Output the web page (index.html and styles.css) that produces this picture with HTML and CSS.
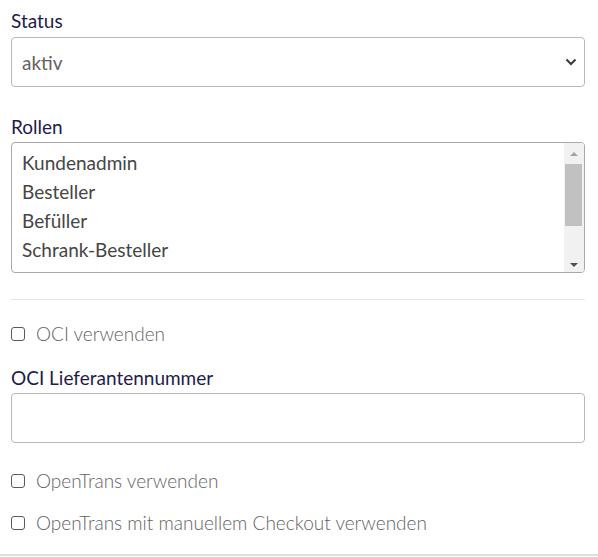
FILE: index.html
```html
<!DOCTYPE html>
<html lang="de">
<head>
<meta charset="utf-8">
<title>Benutzer</title>
<link rel="stylesheet" href="styles.css">
</head>
<body>
<form class="form">
  <div class="field">
    <label class="field-label">Status</label>
    <div class="select">
      <span class="select-value">aktiv</span>
      <svg class="chevron" width="12" height="8" viewBox="0 0 12 8"><path d="M1.5 1.5 L6 6 L10.5 1.5" fill="none" stroke="#3a3a3a" stroke-width="2"/></svg>
    </div>
  </div>

  <div class="field field-rollen">
    <label class="field-label">Rollen</label>
    <div class="listbox">
      <div class="listbox-items">
        <div class="option">Kundenadmin</div>
        <div class="option">Besteller</div>
        <div class="option">Befüller</div>
        <div class="option">Schrank-Besteller</div>
        <div class="option">Schrank-Befüller</div>
      </div>
      <div class="scrollbar">
        <svg class="arrow" width="20" height="14" viewBox="0 0 20 14"><path d="M6 9 L10 5 L14 9 Z" fill="#a3a3a3"/></svg>
        <div class="track"><div class="thumb"></div></div>
        <svg class="arrow" width="20" height="14" viewBox="0 0 20 14"><path d="M6 5 L10 9 L14 5 Z" fill="#505050"/></svg>
      </div>
    </div>
  </div>

  <hr class="divider">

  <label class="check"><span class="box"></span><span class="check-text">OCI verwenden</span></label>

  <div class="field field-oci">
    <label class="field-label">OCI Lieferantennummer</label>
    <div class="input"></div>
  </div>

  <label class="check check-ot"><span class="box"></span><span class="check-text">OpenTrans verwenden</span></label>
  <label class="check check-ot2"><span class="box"></span><span class="check-text">OpenTrans mit manuellem Checkout verwenden</span></label>
</form>
<div class="bottom-rule"></div>
</body>
</html>
```
FILE: styles.css
```css
html, body {
  margin: 0;
  padding: 0;
  background: #fff;
}
body {
  font-family: Lato, "Open Sans", sans-serif;
  font-size: 19px;
  width: 598px;
}
.form {
  display: flex;
  flex-direction: column;
  padding: 9px 13px 0 11px;
}
.field {
  display: flex;
  flex-direction: column;
  gap: 4px;
}
.field-label {
  color: #1f1b4b;
  line-height: 24px;
  font-size: 19px;
}
.select {
  height: 48px;
  border: 1px solid #b9b9b9;
  border-radius: 4px;
  display: flex;
  align-items: center;
  justify-content: space-between;
  padding: 0 7px 0 10px;
}
.select-value {
  color: #636363;
  font-size: 19px;
}
.field-rollen {
  margin-top: 28px;
  gap: 3px;
}
.listbox {
  height: 129px;
  border: 1px solid #a9a9a9;
  border-radius: 4px;
  display: flex;
  overflow: hidden;
}
.listbox-items {
  flex: 1;
  padding: 5px 10px 0;
  overflow: hidden;
}
.option {
  line-height: 29px;
  color: #454545;
  white-space: nowrap;
}
.scrollbar {
  width: 20px;
  background: #f1f1f1;
  display: flex;
  flex-direction: column;
  padding-top: 4px;
  box-sizing: border-box;
}
.arrow { display: block; flex: none; }
.track {
  flex: 1;
  padding-top: 3px;
}
.thumb {
  height: 62px;
  background: #c1c1c1;
  margin: 0 2px 0 1px;
}
.divider {
  margin: 26px 0 0;
  border: 0;
  border-top: 1px solid #e6e6e6;
  height: 0;
}
.check {
  display: flex;
  align-items: center;
  gap: 11px;
  line-height: 24px;
  margin-top: 22px;
}
.box {
  width: 12px;
  height: 12px;
  border: 1px solid #5a5a5a;
  border-radius: 3px;
  flex: none;
}
.check-text {
  color: #636363;
  font-weight: 300;
}
.field-oci {
  margin-top: 20px;
  gap: 3px;
}
.input {
  height: 48px;
  border: 1px solid #b9b9b9;
  border-radius: 4px;
}
.check-ot { margin-top: 26px; }
.check-ot2 { margin-top: 18px; }
.bottom-rule {
  margin-top: 19px;
  border-top: 2px solid #dedede;
}
```
